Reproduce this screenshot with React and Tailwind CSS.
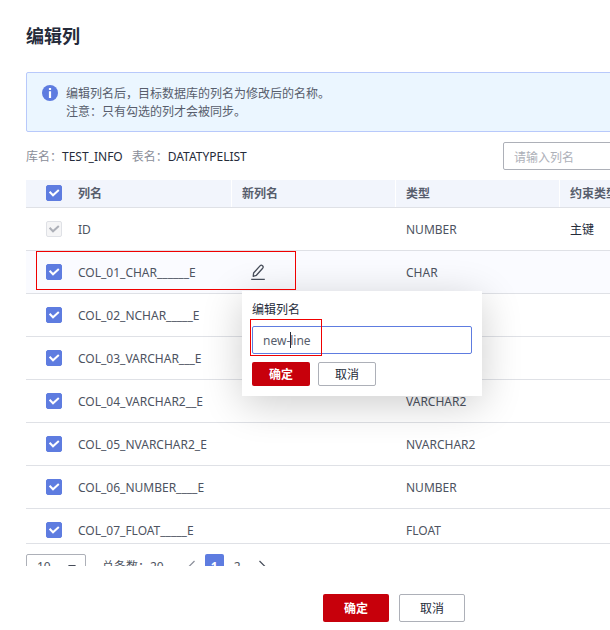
import { useState } from 'react';
import clsx from 'clsx';

const COLUMNS = [
  { name: 'ID', type: 'NUMBER', constraint: '主键', locked: true },
  { name: 'COL_01_CHAR______E', type: 'CHAR', editing: true },
  { name: 'COL_02_NCHAR_____E', type: 'NCHAR' },
  { name: 'COL_03_VARCHAR___E', type: 'VARCHAR' },
  { name: 'COL_04_VARCHAR2__E', type: 'VARCHAR2' },
  { name: 'COL_05_NVARCHAR2_E', type: 'NVARCHAR2' },
  { name: 'COL_06_NUMBER____E', type: 'NUMBER' },
  { name: 'COL_07_FLOAT_____E', type: 'FLOAT' },
];

const Checkbox = ({ checked, disabled, onChange }) => (
  <button
    type="button"
    role="checkbox"
    aria-checked={checked}
    disabled={disabled}
    onClick={onChange}
    className={clsx(
      'flex size-4 items-center justify-center rounded-[2px] border',
      disabled && 'border-[#dfe1e6] bg-[#f5f5f6] text-[#adb0b8]',
      !disabled && checked && 'border-[#5e7ce0] bg-[#5e7ce0] text-white',
      !disabled && !checked && 'border-[#adb0b8] bg-white'
    )}
  >
    {checked && (
      <svg viewBox="0 0 14 14" className="size-3.5 shrink-0" fill="none" stroke="currentColor" strokeWidth="2">
        <path d="M2.600 5.800 6 9.300l5.800-5.300" />
      </svg>
    )}
  </button>
);

const PencilIcon = () => (
  <svg viewBox="0 0 16 16" className="size-4" fill="none" stroke="#464c59" strokeWidth="1.3">
    <path d="M3.200 12.400 3.600 9 10 1.900c.7-.8 1.800-.8 2.500-.2.8.7.8 1.700.2 2.500L6.400 11.300z" strokeLinejoin="round" />
    <path d="M1.200 15.400h13.600" />
  </svg>
);

const EditPopover = ({ value, onChange }) => (
  <div className="absolute left-[10px] top-10 z-10 h-[105px] w-60 bg-white px-[10px] pt-[10px] shadow-[0_8px_40px_rgba(0,0,0,0.2)]">
    <div className="leading-[18px] text-[#252b3a]">编辑列名</div>
    <div className="relative mt-[7px]">
      <input
        className="block h-7 w-full rounded-[2px] border border-[#5e7ce0] px-[10px] text-[#575d6c] outline-none"
        value={value}
        onChange={(e) => onChange(e.target.value)}
      />
      <span className="absolute left-[38px] top-[6px] h-4 w-px bg-[#252b3a]" />
      <span className="pointer-events-none absolute -left-0.5 -top-[7px] h-[37px] w-[72px] border border-[#f00000]" />
    </div>
    <div className="mt-2 flex gap-2">
      <button className="h-6 w-[58px] rounded-[2px] bg-[#c7000b] pt-0.5 font-bold text-white">确定</button>
      <button className="h-6 w-[58px] rounded-[2px] border border-[#adb0b8] pt-0.5 text-[#252b3a]">取消</button>
    </div>
  </div>
);

const GRID = 'grid grid-cols-[42px_164px_164px_164px_1fr] border-b border-[#dfe1e6]';

const App = () => {
  const [draft, setDraft] = useState('new-line');
  const [selected, setSelected] = useState(COLUMNS.map((c) => c.name));

  const toggle = (name) =>
    setSelected((prev) => (prev.includes(name) ? prev.filter((n) => n !== name) : [...prev, name]));

  return (
    <div className="h-[630px] w-full overflow-hidden bg-white font-['Noto_Sans','Noto_Sans_CJK_SC',sans-serif] text-xs text-[#4d5361]">
      <div className="flex h-full w-[788px] flex-col px-[26px]">
        <h1 className="mt-6 text-lg font-bold leading-6 text-[#252b3a]">编辑列</h1>

        <div className="mt-6 flex h-[60px] shrink-0 gap-2 rounded-[2px] border border-[#b8c9fb] bg-[#ebf6ff] px-[15px] pt-3">
          <svg viewBox="0 0 16 16" className="size-4 shrink-0">
            <circle cx="8" cy="8" r="8" fill="#5e7ce0" />
            <path d="M6.900 3h2.200v2H6.900zM6.900 6.200h2.200v6.800H6.900z" fill="#fff" />
          </svg>
          <div className="leading-[18px] text-[#575d6c]">
            <p>编辑列名后，目标数据库的列名为修改后的名称。</p>
            <p>注意：只有勾选的列才会被同步。</p>
          </div>
        </div>

        <div className="mt-[10px] flex h-7 shrink-0 items-center">
          <div className="flex pt-0.5">
            <span className="text-[#8a8e99]">库名：</span>
            <span className="text-[#252b3a]">TEST_INFO</span>
            <span className="ml-[9px] text-[#8a8e99]">表名：</span>
            <span className="text-[#252b3a]">DATATYPELIST</span>
          </div>
          <input
            className="ml-auto h-7 w-[259px] rounded-[2px] border border-[#adb0b8] px-[10px] pt-0.5 placeholder:text-[#adb0b8]"
            placeholder="请输入列名"
          />
        </div>

        {/* Columns table */}
        <div className="mt-[10px] h-[364px] shrink-0 overflow-visible border-b border-[#dfe1e6]">
          <div className={clsx(GRID, 'h-7 bg-[#f2f5fc] font-bold leading-[27px] text-[#575d6c]')}>
            <div className="pl-5 pt-[5px]">
              <Checkbox checked />
            </div>
            {['列名', '新列名', '类型'].map((title) => (
              <div key={title} className="border-r border-white pl-[10px]">
                {title}
              </div>
            ))}
            <div className="pl-[10px]">约束类型</div>
          </div>
          {COLUMNS.map((col, i) => (
            <div
              key={col.name}
              className={clsx(
                GRID,
                'relative leading-[44px]',
                i === COLUMNS.length - 1 ? 'h-[34px] border-b-0!' : 'h-[43px]',
                col.editing && 'z-10 bg-[#fafbff]'
              )}
            >
              <div className="pl-5 pt-[13px]">
                <Checkbox
                  checked={selected.includes(col.name)}
                  disabled={col.locked}
                  onChange={() => toggle(col.name)}
                />
              </div>
              <div className="pl-[10px]">{col.name}</div>
              <div className="relative h-full leading-4">
                {col.editing && (
                  <>
                    <EditPopover value={draft} onChange={setDraft} />
                    <button className="absolute left-[18px] top-[13px] z-10">
                      <PencilIcon />
                    </button>
                  </>
                )}
              </div>
              <div className="pl-[10px]">{col.type}</div>
              <div className="pl-[10px] text-[#252b3a]">{col.constraint}</div>
              {col.editing && (
                <span className="pointer-events-none absolute left-[10px] top-0 z-10 h-[39px] w-[260px] border border-[#f00000]" />
              )}
            </div>
          ))}
        </div>

        <div className="h-[22px] shrink-0 overflow-hidden pt-[10px]">
          <div className="flex h-6 items-center">
            <div className="flex h-6 w-[60px] items-center justify-between rounded-[2px] border border-[#adb0b8] pl-[10px] pr-[9px] pt-0.5">
              10
              <svg viewBox="0 0 8 5" className="h-[5px] w-2" fill="#464c59">
                <path d="M0 0h8L4 5z" />
              </svg>
            </div>
            <span className="ml-4 pt-0.5">总条数：20</span>
            <svg viewBox="0 0 8 12" className="ml-6 h-3 w-2" fill="none" stroke="#8a8e99" strokeWidth="1.2">
              <path d="M6.500 1 1.500 6l5 5" />
            </svg>
            <span className="ml-[9px] flex h-6 w-[19px] items-center justify-center rounded-[2px] bg-[#5e7ce0] pt-0.5 font-bold text-white">
              1
            </span>
            <span className="ml-[10px] pt-0.5">2</span>
            <svg viewBox="0 0 8 12" className="ml-[17px] h-3 w-2" fill="none" stroke="#464c59" strokeWidth="1.2">
              <path d="m1.500 1 5 5-5 5" />
            </svg>
          </div>
        </div>

        <div className="mt-7 flex shrink-0 justify-center gap-[10px]">
          <button className="h-7 w-[66px] rounded-[2px] bg-[#c7000b] pt-0.5 font-bold text-white">确定</button>
          <button className="h-7 w-[66px] rounded-[2px] border border-[#adb0b8] pt-0.5 text-[#252b3a]">取消</button>
        </div>
      </div>
    </div>
  );
};

export default App;
